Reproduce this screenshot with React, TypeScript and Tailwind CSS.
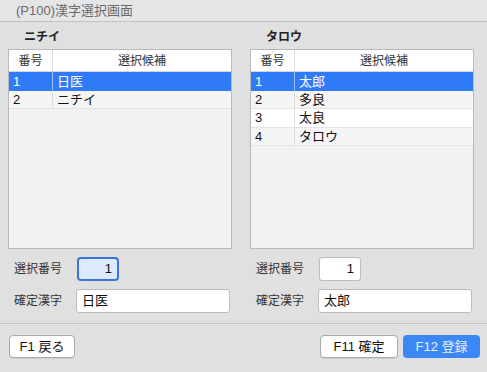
import React from 'react';

type Cand = { no: number; text: string };

const font = { fontFamily: '"Liberation Sans", "Noto Sans CJK JP", sans-serif' };

function CandidateTable({ rows }: { rows: Cand[] }) {
  return (
    <div className="w-[224px] h-[200px] border border-[#b9b9b9] bg-[#f2f2f2] flex flex-col">
      <div className="flex h-[22px] bg-white border-b border-[#d6d6d6] text-[12px] text-[#333]">
        <div className="w-[44px] flex items-center justify-center border-r border-[#dcdcdc]">番号</div>
        <div className="flex-1 flex items-center justify-center">選択候補</div>
      </div>
      {rows.map((r, i) => {
        const selected = i === 0;
        return (
          <div
            key={r.no}
            className={
              selected
                ? 'flex h-[18.5px] bg-[#2f7af6] text-white text-[13px]'
                : i % 2 === 1
                ? 'flex h-[18.5px] bg-[#f5f5f5] border-b border-[#e4e4e4] text-[13px] text-[#111]'
                : 'flex h-[18.5px] bg-white border-b border-[#e4e4e4] text-[13px] text-[#111]'
            }
          >
            <div
              className={
                selected
                  ? 'w-[44px] pl-[4px] flex items-center border-r border-[#9ec0f8]'
                  : 'w-[44px] pl-[4px] flex items-center border-r border-[#dcdcdc]'
              }
            >
              {r.no}
            </div>
            <div className="flex-1 pl-[4px] flex items-center">{r.text}</div>
          </div>
        );
      })}
    </div>
  );
}

function Panel({
  title,
  rows,
  kanji,
  focused,
}: {
  title: string;
  rows: Cand[];
  kanji: string;
  focused?: boolean;
}) {
  return (
    <div className="w-[224px] flex flex-col">
      <div className="h-[27px] pl-[16px] pt-[6px] text-[12px] font-bold text-[#222]">{title}</div>
      <CandidateTable rows={rows} />
      <div className="flex items-center mt-[8px] h-[24px]">
        <div className="w-[69px] pl-[6px] text-[12px] text-[#333]">選択番号</div>
        <div
          className={
            focused
              ? 'w-[42px] h-[24px] rounded-[4px] border-2 border-[#3a73d9] bg-[#dde9fc] flex items-center justify-end pr-[5px] text-[13px] text-[#111]'
              : 'w-[42px] h-[24px] rounded-[3px] border border-[#bcbcbc] bg-white flex items-center justify-end pr-[6px] text-[13px] text-[#111]'
          }
        >
          1
        </div>
      </div>
      <div className="flex items-center mt-[8px] h-[24px]">
        <div className="w-[68px] pl-[6px] text-[12px] text-[#333]">確定漢字</div>
        <div className="w-[154px] h-[24px] rounded-[3px] border border-[#bcbcbc] bg-white flex items-center pl-[5px] text-[13px] text-[#111]">
          {kanji}
        </div>
      </div>
    </div>
  );
}

export default function App() {
  const left: Cand[] = [
    { no: 1, text: '日医' },
    { no: 2, text: 'ニチイ' },
  ];
  const right: Cand[] = [
    { no: 1, text: '太郎' },
    { no: 2, text: '多良' },
    { no: 3, text: '太良' },
    { no: 4, text: 'タロウ' },
  ];

  return (
    <div className="w-[487px] h-[372px] bg-[#e0e0e0] overflow-hidden flex flex-col" style={font}>
      <div className="h-[22px] bg-[#e5e5e5] border-b border-[#c4c4c4] pl-[16px] flex items-center text-[13px] text-[#6a6a6a]">
        (P100)漢字選択画面
      </div>
      <div className="flex gap-[18px] pl-[8px]">
        <Panel title="ニチイ" rows={left} kanji="日医" focused />
        <Panel title="タロウ" rows={right} kanji="太郎" />
      </div>
      <div className="mt-[10px] border-t border-[#c2c2c2]" />
      <div className="flex items-center pt-[11px] px-[9px]">
        <button className="h-[23px] w-[66px] rounded-[4px] border border-[#a9a9a9] bg-white text-[13px] text-[#111] shadow-[0_1px_0_rgba(0,0,0,0.08)]">
          F1 戻る
        </button>
        <div className="flex-1" />
        <button className="h-[23px] w-[78px] rounded-[4px] border border-[#a9a9a9] bg-white text-[13px] text-[#111] shadow-[0_1px_0_rgba(0,0,0,0.08)]">
          F11 確定
        </button>
        <button className="ml-[5px] mr-[-2px] h-[23px] w-[77px] rounded-[4px] bg-[#3b87f6] text-[13px] text-[#e8f0ff]">
          F12 登録
        </button>
      </div>
    </div>
  );
}
